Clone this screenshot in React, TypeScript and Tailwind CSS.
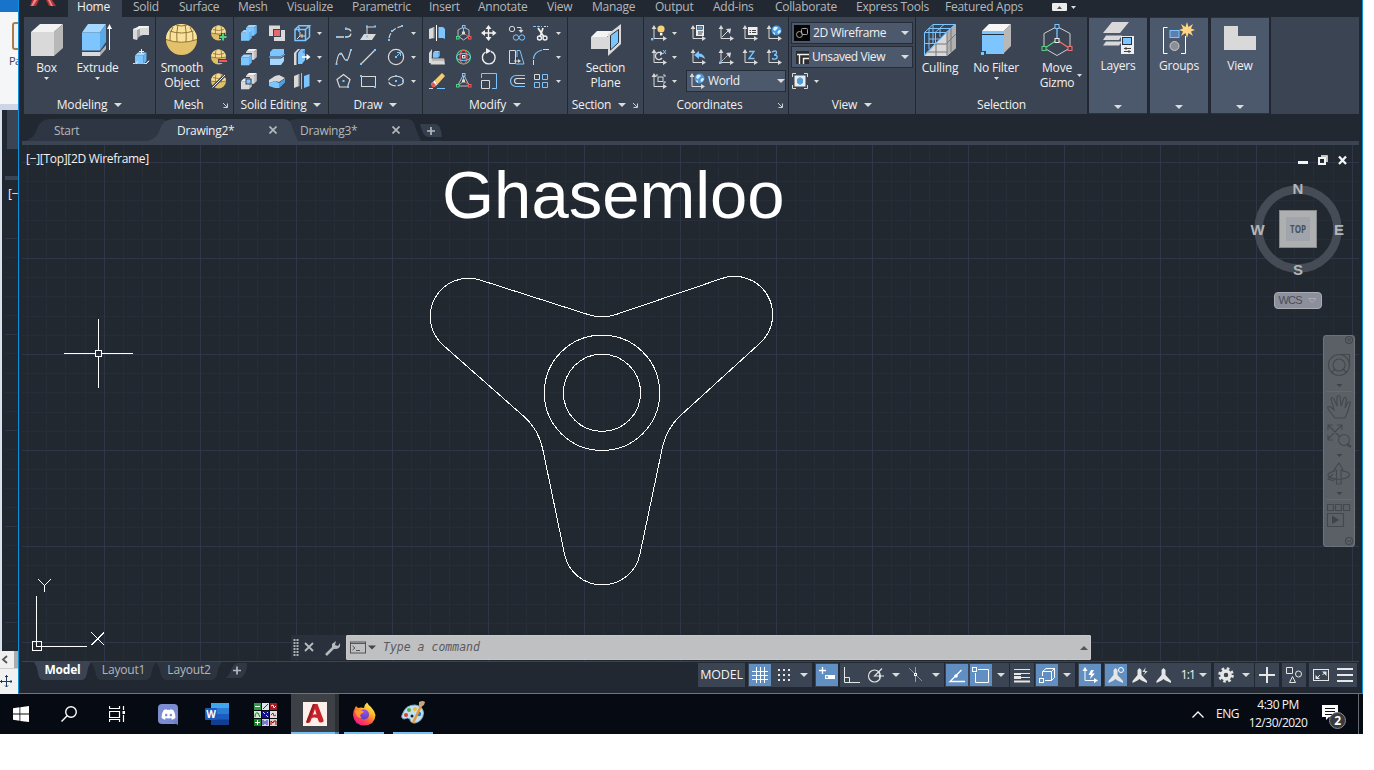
import React from "react";
import { FaDiscord } from "react-icons/fa";

type Kids = { children?: React.ReactNode };

const L = "#d9d9d9";
const B = "#7cc5ff";
const D = "#3b4453";

function Sm({ children }: Kids) {
  return (
    <svg className="block h-4 w-4 shrink-0 overflow-visible" viewBox="0 0 16 16" fill="none" strokeWidth="1">
      {children}
    </svg>
  );
}

function Big({ children }: Kids) {
  return (
    <svg className="block h-8 w-8 shrink-0 overflow-visible" viewBox="0 0 32 32" fill="none">
      {children}
    </svg>
  );
}

function Tri({ big = false }: { big?: boolean }) {
  return big ? (
    <svg className="block h-1 w-2 shrink-0" viewBox="0 0 8 4">
      <path d="M0 0H8L4 4Z" fill="#dcdcdc" />
    </svg>
  ) : (
    <svg className="block h-[3px] w-[5px] shrink-0" viewBox="0 0 5 3">
      <path d="M0 0H5L2.5 3Z" fill="#dcdcdc" />
    </svg>
  );
}

function Launcher() {
  return (
    <svg className="block h-[5px] w-[5px]" viewBox="0 0 5 5" fill="none" stroke="#d0d0d0">
      <path d="M0 0L4 4M4.5 0.5V4.5H0.5" />
    </svg>
  );
}

function Dots({ pts }: { pts: [number, number][] }) {
  return (
    <>
      {pts.map(([x, y]) => (
        <rect key={x + "-" + y} x={x - 1} y={y - 1} width="2" height="2" fill={B} />
      ))}
    </>
  );
}

function Axes({ children }: Kids) {
  return (
    <Sm>
      <path d="M3 2V13.5H13" stroke={L} />
      <path d="M0.6 4L3 0L5.4 4ZM12 11L16 13.5L12 16Z" fill={L} />
      {children}
    </Sm>
  );
}

function Cube({ x, y, s, f, t, r }: { x: number; y: number; s: number; f: string; t: string; r: string }) {
  const d = s * 0.35;
  return (
    <g>
      <rect x={x} y={y + d} width={s} height={s} fill={f} />
      <path d={`M${x} ${y + d}l${d} ${-d}h${s}l${-d} ${d}Z`} fill={t} />
      <path d={`M${x + s} ${y + d}l${d} ${-d}v${s}l${-d} ${d}Z`} fill={r} />
    </g>
  );
}

const blueCube = { f: "#7cc5ff", t: "#a0d5ff", r: "#66b4f0" };
const greyCube = { f: "#d9d9d9", t: "#f2f2f2", r: "#bfbfbf" };

/* ---------- ribbon icons ---------- */

const SmallSphere = () => (
  <>
    <circle cx="7.5" cy="8" r="7.5" fill="#e0bd67" />
    <path d="M0 8a7.5 7.5 0 0 1 15 0Z" fill="#f6dc93" />
    <path d="M0 8Q7.5 10.5 15 8M2 4.5Q7.5 6.5 13 4.5M5 1Q4 5 4.5 9M10 1Q11 5 10.5 9" stroke="#8a7038" strokeWidth="0.8" />
  </>
);

const Globe = () => (
  <>
    <circle cx="10.5" cy="5.5" r="5" fill="#4d9bdc" />
    <path d="M8 2Q11 1 12 3Q10 5 9 6Q6 5 8 2M12 6Q14 4 15 6Q14 9 12 9Q11 7 12 6M7 7L9 8L9 10Q7 9 7 7" fill="#d9f0ff" />
  </>
);

const modelingIcons = [
  <Sm>
    <path d="M0 4Q5 2 6 1H16V10H10Q4 11 4 15L0 14Z" fill="#d9d9d9" />
    <path d="M0 4Q5 3 6 1H16L14 3H8Q6 4 4 5Z" fill="#f4f4f4" />
    <path d="M4 5Q5 4 7 4V11Q5 12 4 15Z" fill="#a8a8a8" />
  </Sm>,
  <Sm>
    <path d="M0 14.5H13L16 11.5" stroke={L} />
    <Cube x={2} y={3.5} s={8.5} {...blueCube} />
    <path d="M8.5 0V5M6 2.5H11M3 15L5 12M13 15L16 12" stroke="#eee" />
  </Sm>,
];

const meshIcons = [
  <Sm><SmallSphere /><path d="M12 8V16M8 12H16" stroke="#3b4453" strokeWidth="4" /><path d="M12 8.5V15.5M8.5 12H15.5" stroke="#53d17c" strokeWidth="2" /></Sm>,
  <Sm><SmallSphere /><path d="M7 12H16" stroke="#3b4453" strokeWidth="4" /><path d="M8 12H16" stroke="#f05a5a" strokeWidth="2" /></Sm>,
  <Sm><SmallSphere /><path d="M1 15L15 1" stroke="#3b4453" strokeWidth="3" /><path d="M1.5 14.5L14 2" stroke="#eee" /></Sm>,
];

const solidIcons = [
  <Sm><Cube x={5} y={0} s={8} {...blueCube} /><Cube x={0} y={5} s={8} {...blueCube} /><path d="M5.5 3H8V8H5.5Z" fill={B} /></Sm>,
  <Sm><path d="M0 0.5H11V4H4V11H0ZM12 5H16V16H5V12H12Z" fill={L} /><rect x="4.5" y="4.5" width="7" height="7" fill="#e8696b" stroke={D} /></Sm>,
  <Sm><path d="M1 4.5H11.5V15.5H1ZM1 4.5L5 0.8H15.5L11.5 4.5M15.5 0.8V12L11.5 15.5M5 2V7" stroke={B} strokeWidth="1.5" /><path d="M6 7V11H11M6 11L3 14M8 9V13" stroke={L} /></Sm>,
  <Tri />,
  <Sm><Cube x={5} y={0} s={8} {...greyCube} /><path d="M-0.5 6L2 4H11V12L9 16H-0.5Z" fill={D} /><Cube x={0} y={5.5} s={8} {...blueCube} /></Sm>,
  <Sm><path d="M1 3L4 0H15V5L12 7H1Z" fill={B} /><path d="M0 8H12L16 5" stroke={B} /><path d="M1 9.5H12L15 7.5V12L12 16H1Z" fill="#a6d8ff" /></Sm>,
  <Sm><path d="M0 4L4 0H6L2.5 4V16H0Z" fill={L} /><path d="M4 4L7 0H11V11L8 15H4Z" fill={B} /><path d="M8 3L11 0V5" fill="#4c9ede" /><path d="M8 8H13" stroke="#fff" strokeWidth="1.6" /><path d="M12.5 4.8L16.5 8L12.5 11.2Z" fill="#fff" /></Sm>,
  <Tri />,
  <Sm><Cube x={5} y={0} s={8} {...greyCube} /><path d="M-0.5 6L2 4H9L9 16H-0.5Z" fill={D} /><Cube x={0} y={5.5} s={8} {...greyCube} /><rect x="5" y="6" width="5" height="5" fill={B} stroke={D} /></Sm>,
  <Sm><path d="M0 7L6 3L10 2L16 5L10 9L6 8L0 10Z" fill={L} /><path d="M0 10L6 8L10 10L16 6V9L10 15H6L0 13Z" fill={B} /><path d="M10 10L16 6V9L10 15Z" fill="#4c9ede" /></Sm>,
  <Sm><path d="M0 3L5 1V13L0 15Z" fill={L} /><path d="M4 1.4L5.5 1V13L4 13.5Z" fill="#aaa" /><path d="M7.5 0V16" stroke={B} /><path d="M10 3L15.5 1V13L10 15Z" fill={B} /></Sm>,
  <Tri />,
];

const drawIcons = [
  <Sm><path d="M1 12H9M9 4Q15 3 15 7.5Q15 12 11 12" stroke={L} strokeWidth="1.3" strokeDasharray="7 2" /><Dots pts={[[1, 12], [10, 3.5], [10, 12]]} /></Sm>,
  <Sm><path d="M0 15L4 9H16L12 15Z" fill={L} /><path d="M7 12V2H14" stroke={L} /><Dots pts={[[7, 1.5], [15, 1.5], [7, 11.5]]} /></Sm>,
  <Sm><path d="M1 13Q3 4 13 1.5" stroke={L} strokeWidth="1.2" strokeDasharray="5 2" /><Dots pts={[[1, 15], [4, 6], [14, 1]]} /></Sm>,
  <Tri />,
  <Sm><path d="M0.5 14Q2 4 5 4Q6 5 8 9Q10 13 12 10Q13 8 14.5 2" stroke={L} strokeWidth="1.1" /><Dots pts={[[0.5, 15], [4, 5], [11, 11], [15, 1]]} /></Sm>,
  <Sm><path d="M1 15L15 1" stroke={L} strokeWidth="1.2" /><Dots pts={[[1, 15], [15, 1]]} /></Sm>,
  <Sm><circle cx="8" cy="8" r="7.6" stroke={L} strokeWidth="1.2" /><path d="M8 8L12 4M12.5 7V3.5H9" stroke={B} /><Dots pts={[[8, 8]]} /></Sm>,
  <Tri />,
  <Sm><path d="M7.5 1.5L14 6.5L11.5 14H3.5L1 6.5Z" stroke={L} strokeWidth="1.2" /><Dots pts={[[7.5, 8], [12, 14]]} /></Sm>,
  <Sm><rect x="1.5" y="3.5" width="14" height="10" stroke={L} /><Dots pts={[[1, 3], [15, 14]]} /></Sm>,
  <Sm><ellipse cx="8" cy="8" rx="7.5" ry="4.8" stroke={L} strokeWidth="1.2" strokeDasharray="8 2" /><Dots pts={[[8, 8], [8, 3], [15, 8]]} /></Sm>,
  <Tri />,
];

const Gizmo = ({ line = true }: { line?: boolean }) => (
  <>
    {line && <path d="M7.5 2L13 5V11L7.5 15L2 11V5Z" stroke="#b9bdc3" />}
    <path d="M7.5 8V3" stroke={B} /><path d="M7.5 8L3 12" stroke="#53d17c" /><path d="M7.5 8L13 12" stroke="#f05a5a" />
    <rect x="6.5" y="0.5" width="2.500" height="2.500" stroke={B} fill={D} />
    <rect x="0.5" y="11.5" width="2.500" height="2.500" stroke="#53d17c" fill={D} />
    <rect x="12.5" y="11.5" width="2.500" height="2.500" stroke="#f05a5a" fill={D} />
    <rect x="6.5" y="7" width="2" height="2" stroke="#d9d9d9" fill={D} />
  </>
);

const modifyIcons = [
  <Sm><path d="M0 4L5 2V13L0 14Z" fill={L} /><path d="M4 2.4L5.5 2V13L4 13.5Z" fill="#aaa" /><path d="M7.5 0V16" stroke="#fff" /><path d="M9.5 2H14L16 4V14L14 13H9.5Z" fill={B} /></Sm>,
  <Sm><Gizmo /></Sm>,
  <Sm><path d="M7.5 2V14M2 8H14" stroke="#f0f0f0" strokeWidth="1.4" /><path d="M7.5 0L10.5 4H4.5ZM7.5 16L10.5 12H4.5ZM0 8L4 5V11ZM15.5 8L11.5 5V11Z" fill="#f0f0f0" /></Sm>,
  <Sm><circle cx="3" cy="4" r="2.7" stroke={L} /><path d="M8 2.5H12V6" stroke={L} /><path d="M9.5 5H14.5L12 8Z" fill={L} /><circle cx="7" cy="12.5" r="2.7" stroke={B} /><circle cx="13" cy="12.5" r="2.7" stroke={B} /></Sm>,
  <Sm><path d="M0 1.5H9" stroke={B} strokeDasharray="3 1" /><path d="M11 1.5H15" stroke={L} strokeDasharray="2 1" /><path d="M5 3L11 12M10 3L7 12" stroke="#f0f0f0" strokeWidth="1.7" /><circle cx="6.5" cy="13" r="2" stroke="#f0f0f0" strokeWidth="1.4" /><circle cx="12" cy="13" r="2" stroke="#f0f0f0" strokeWidth="1.4" /></Sm>,
  <Tri />,
  <Sm><path d="M0 4L3 0V2L2.5 14H0Z" fill={L} /><Cube x={4} y={2} s={5} {...blueCube} /><path d="M0 9.5H15L16 15.5H2Z" fill={L} /><path d="M3 11H16" stroke="#999" /></Sm>,
  <Sm><circle cx="7.5" cy="8" r="7" stroke="#53d17c" strokeWidth="1.2" /><ellipse cx="7.5" cy="8" rx="3.5" ry="7" stroke="#f05a5a" strokeWidth="1.2" /><ellipse cx="7.5" cy="8" rx="7" ry="3.5" stroke={B} /><rect x="6.5" y="6.5" width="2.5" height="2.5" stroke="#eee" fill={D} /></Sm>,
  <Sm><path d="M4.5 3A6.4 6.4 0 1 0 10 2.5" stroke="#f0f0f0" strokeWidth="1.4" /><path d="M4 0L9 3L4 6Z" fill="#f0f0f0" transform="translate(1 -1)" /></Sm>,
  <Sm><path d="M0.5 1.5H6.5V14.5H0.5ZM5 12H10" stroke={L} /><path d="M9 10L12 12L9 14Z" fill={L} /><path d="M8 1.5H11L15 15H7M8 1.5V8" stroke={B} /></Sm>,
  <Sm><path d="M0.5 10Q1 3 9 1" stroke={B} strokeWidth="1.2" /><path d="M10 0.5H16M0.5 11V16" stroke={L} /></Sm>,
  <Tri />,
  <Sm><path d="M6 7L13 0L16 3L8 12Z" fill="#f5cd6e" /><path d="M6 7L8 12L5 14L2 11Z" fill="#fff" /><path d="M4 9L7 12L5 14.5Q2 14 2 11.5Z" fill="#e25858" /><path d="M0 15.5H4" stroke={L} /><path d="M8 15.5H16" stroke={B} /></Sm>,
  <Sm><path d="M7.5 1.5L1.5 13H13.5Z" stroke="#b9bdc3" /><Gizmo line={false} /></Sm>,
  <Sm><path d="M0.5 7.5H8.5V15.5H0.5Z" stroke={L} /><path d="M0.5 5V0.5H15.5V15.5H11" stroke={B} /></Sm>,
  <Sm><path d="M16 2.5H7A5.5 5.5 0 0 0 7 13.5H16" stroke={B} strokeWidth="1.2" /><path d="M16 5.5H8A2.5 2.5 0 0 0 8 10.5H16" stroke={L} strokeWidth="1.2" /></Sm>,
  <Sm><path d="M1.5 1.5H6.5V6.5H1.5Z" stroke={L} /><path d="M9.5 1.5H14.5V6.5H9.5ZM1.5 9.5H6.5V14.5H1.5ZM9.5 9.5H14.5V14.5H9.5Z" stroke={B} /></Sm>,
  <Tri />,
];

const coordIcons = [
  <Axes><circle cx="10" cy="4" r="3.6" fill="#fbd277" /><rect x="9" y="8" width="2.4" height="2.4" fill="#fff" /><rect x="0" y="13" width="2.4" height="2.4" fill={B} /></Axes>,
  <Tri />,
  <Axes><rect x="6" y="0" width="8" height="11" fill="#eee" /><rect x="7.5" y="1.5" width="5" height="3" fill="#4c9ede" stroke="#333" strokeWidth="0.6" /><path d="M8 7H13M8 9H12" stroke="#444" /></Axes>,
  <Axes><path d="M4 12L11 5" stroke={L} /><path d="M8 4L13 3.5L12 9Z" fill={L} /></Axes>,
  <Axes><rect x="6" y="2" width="9.5" height="8" fill="#eee" /><path d="M7.5 5.5H9M10 5.5H14M7.5 7.5H9M10 7.5H14" stroke="#444" /></Axes>,
  <Axes><Globe /></Axes>,
  <Axes><path d="M11 5A3.6 3.6 0 1 0 11 9" stroke={L} strokeWidth="1.4" /><path d="M9 2L12 4.5L9 7Z" fill={L} /><path d="M12 1L15 5M15 1L12 5" stroke={B} /></Axes>,
  <Tri />,
  <Axes><path d="M4 6L9 2V4.5Q14 4.5 15 10Q12 7.5 9 7.5V10Z" fill={B} /></Axes>,
  <Axes><path d="M4 12L11 5" stroke={L} strokeDasharray="2 1" /><path d="M8 4L13 3.5L12 9Z" fill={L} /><rect x="1" y="12.5" width="2.5" height="2.5" fill={B} /></Axes>,
  <Axes><path d="M7 2.5H12L7 9.5H12.5" stroke={B} strokeWidth="1.3" /></Axes>,
  <Axes><path d="M6 3Q11 0.5 10.5 4Q10 6 8 6Q12 6 11 9Q9 11 6 9.5" stroke={B} strokeWidth="1.4" /></Axes>,
];

function IconGrid({ icons, className }: { icons: React.ReactNode[]; className: string }) {
  return (
    <div className={"grid auto-rows-[24px] items-center " + className}>
      {icons.map((icon, i) => (
        <div key={i}>{icon}</div>
      ))}
    </div>
  );
}

function Panel({ title, width, arrow, launcher, shift = "", children }: Kids & { title: string; width: string; arrow?: boolean; launcher?: boolean; shift?: string }) {
  return (
    <section className={"mr-px flex h-[97px] shrink-0 flex-col bg-[#3b4453] pt-1 " + width}>
      <div className="h-[72px]">{children}</div>
      <div className={"relative flex h-[21px] items-center justify-center gap-[7px] pt-[3px] " + shift}>
        <span className="whitespace-nowrap leading-[16px]">{title}</span>
        {arrow && <Tri big />}
        {launcher && <div className="absolute top-[10px] right-[5px]"><Launcher /></div>}
      </div>
    </section>
  );
}

function BigButton({ icon, lines, width, arrow }: { icon: React.ReactNode; lines: string[]; width: string; arrow?: boolean }) {
  return (
    <div className={"flex shrink-0 flex-col items-center pt-[3px] " + width}>
      {icon}
      <div className="mt-[4px] text-center leading-[15px] whitespace-nowrap">
        {lines.map((t) => (
          <div key={t}>{t}</div>
        ))}
      </div>
      {arrow && <div className="mt-[2px]"><Tri /></div>}
    </div>
  );
}

function Select({ icon, label, className }: { icon: React.ReactNode; label: string; className: string }) {
  return (
    <div className={"flex h-[22px] items-center border border-[#252c38] bg-[#4c586c] " + className}>
      {icon}
      <span className="ml-[3px] flex-1 tracking-[-0.400px] whitespace-nowrap">{label}</span>
      <Tri big />
    </div>
  );
}

function Collapsed({ icon, label }: { icon: React.ReactNode; label: string }) {
  return (
    <section className="flex h-[97px] w-[58px] shrink-0 flex-col items-center border-y border-[#2b3340] bg-[#4c586c] pt-1">
      {icon}
      <span className="mt-[4px] leading-[15px]">{label}</span>
      <div className="mt-auto mb-[4px]"><Tri big /></div>
    </section>
  );
}

const menus: [string, string][] = [
  ["Solid", "w-[46px]"], ["Surface", "w-[59px]"], ["Mesh", "w-[49px]"], ["Visualize", "w-[65px]"], ["Parametric", "w-[77px]"],
  ["Insert", "w-[49px]"], ["Annotate", "w-[69px]"], ["View", "w-[45px]"], ["Manage", "w-[63px]"], ["Output", "w-[58px]"],
  ["Add-ins", "w-[62px]"], ["Collaborate", "w-[81px]"], ["Express Tools", "w-[89px]"], ["Featured Apps", "w-[107px]"],
];

function MenuBar() {
  return (
    <nav className="flex h-[17px] items-start leading-[14px] tracking-[-0.250px] whitespace-nowrap text-[#b4b8be]">
      <div className="w-[49px] pl-[11px]">
        <svg className="block h-[6px] w-[26px]" viewBox="0 0 26 6">
          <path d="M2 0H9L6 6H0ZM16 0H22L26 6H19Z" fill="#b53236" />
          <path d="M4 0H7L3 6H1ZM18 0H20L23 6H21Z" fill="#e8898b" />
        </svg>
      </div>
      <div className="mr-[11px] h-[17px] w-[54px] bg-[#3b4453] pr-[3px] text-center text-[#f2f2f2]">Home</div>
      {menus.map(([m, w]) => (
        <div key={m} className={"shrink-0 " + w}>{m}</div>
      ))}
      <div className="mt-[3px] flex h-2 w-[15px] items-center justify-center rounded-[1px] bg-[#ececec]">
        <svg className="h-[3px] w-[5px]" viewBox="0 0 5 3"><path d="M0 3L2.5 0L5 3Z" fill="#555" /></svg>
      </div>
      <div className="mt-[6px] ml-1"><Tri /></div>
    </nav>
  );
}

function Ribbon() {
  return (
    <div className="flex h-[97px] pl-[5px] text-[#f0f0f0]">
      <Panel title="Modeling" width="w-[131px]" arrow>
        <div className="flex">
          <BigButton width="w-[45px]" lines={["Box"]} arrow icon={
            <Big>
              <path d="M0 8L9 0H32L23 8Z" fill="#f2f2f2" /><path d="M0 8H23V32H0Z" fill="#d9d9d9" /><path d="M23 8L32 0V24L23 32Z" fill="#b8b8b8" />
            </Big>} />
          <BigButton width="w-[57px]" lines={["Extrude"]} arrow icon={
            <Big>
              <path d="M0 28H18V32H0Z" fill={L} /><path d="M18 28L24 21V25L18 32Z" fill="#b0b0b0" />
              <path d="M0 8.5L6 0H24L18 8.5Z" fill="#a6d8ff" /><path d="M0 8.5H18V26.5H0Z" fill={B} /><path d="M18 8.5L24 0V18L18 26.5Z" fill="#5aa8e6" />
              <path d="M27.5 3V26" stroke="#fff" /><path d="M25 5L27.5 0L30 5Z" fill="#fff" />
            </Big>} />
          <IconGrid icons={modelingIcons} className="pl-[7px]" />
        </div>
      </Panel>
      <Panel title="Mesh" width="w-[77px]" launcher shift="pr-[12px]">
        <div className="flex">
          <BigButton width="w-[52px]" lines={["Smooth", "Object"]} icon={
            <Big>
              <circle cx="15.5" cy="15.5" r="15.5" fill="#e3c06a" />
              <path d="M0 15.5A15.5 15.5 0 0 1 31 15.5Q15.5 21 0 15.5" fill="#fbe29c" />
              <path d="M0 15.5Q15.5 21 31 15.5M3.5 7Q15.5 11 27.5 7M12 0.5Q10 9 11 18M19 0.5Q21 9 20 18M7 3Q3 9 4 17M24 3Q28 9 27 17M10 1Q15.5 3 21 1" stroke="#8f7536" />
            </Big>} />
          <IconGrid icons={meshIcons} className="pl-[3px]" />
        </div>
      </Panel>
      <Panel title="Solid Editing" width="w-[94px]" arrow>
        <IconGrid icons={solidIcons} className="grid-cols-[28px_25px_23px_9px] pl-[7px]" />
      </Panel>
      <Panel title="Draw" width="w-[93px]" arrow>
        <IconGrid icons={drawIcons} className="grid-cols-[24px_28px_23px_9px] pl-[7px]" />
      </Panel>
      <Panel title="Modify" width="w-[144px]" arrow>
        <IconGrid icons={modifyIcons} className="grid-cols-[27px_25px_28px_24px_23px_9px] pl-[6px]" />
      </Panel>
      <Panel title="Section" width="w-[75px]" arrow launcher shift="pr-[13px]">
        <div className="flex">
          <BigButton width="w-[75px]" lines={["Section", "Plane"]} icon={
            <Big>
              <path d="M1 13L7 7H23L17 13Z" fill="#f4f4f4" /><path d="M1 13H18V25H1Z" fill={L} />
              <path d="M18 10L31 0V20L18 32Z" fill={L} /><path d="M20.5 11.5L28.5 5.5V18.5L20.5 26Z" fill={B} stroke="#2b3340" />
            </Big>} />
        </div>
      </Panel>
      <Panel title="Coordinates" width="w-[144px]" launcher shift="pr-[13px]">
        <IconGrid icons={coordIcons} className="grid-cols-[21px_18px_28px_24px_24px_20px] pl-[7px]" />
        <div className="flex h-6 items-center pl-[7px]">
          <Axes><path d="M5 4V2H7M12 2H14V4M14 8V10H12" stroke={L} /><rect x="7" y="4" width="5" height="4.5" stroke={L} /></Axes>
          <div className="ml-[5px]"><Tri /></div>
          <Select className="ml-[9px] w-[100px] pl-[2px]" label="World" icon={<Axes><Globe /></Axes>} />
        </div>
      </Panel>
      <Panel title="View" width="w-[126px]" arrow>
        <div className="flex flex-col gap-[2px] px-[2px] pt-px">
          <Select className="pr-[3px] pl-[2px]" label="2D Wireframe" icon={
            <svg className="h-4 w-4 shrink-0" viewBox="0 0 16 16" fill="none" stroke="#a5a5a5"><rect width="16" height="16" fill="#050505" stroke="none" /><circle cx="5.5" cy="9.5" r="3" /><rect x="7.5" y="3.5" width="6" height="6" rx="1" /></svg>} />
          <Select className="pr-[3px] pl-[4px]" label="Unsaved View" icon={
            <svg className="h-[13px] w-[13px] shrink-0" viewBox="0 0 13 13" fill="none" stroke="#f0f0f0"><rect width="13" height="13" fill="#2b2b2b" stroke="none" /><path d="M1 3.5H13M3.5 4V13M7.5 13V7.5H13" strokeWidth="1.4" /></svg>} />
          <div className="flex h-[22px] items-center pl-px">
            <Sm>
              <path d="M0.5 4V0.5H4M12 0.5H15.5V4M15.5 12V15.5H12M4 15.5H0.5V12" stroke={L} />
              <rect x="2.5" y="2.5" width="11" height="11" fill="#ececec" /><path d="M5 6L8 4L11 6V10L8 12L5 10Z" fill="#4c9ede" />
            </Sm>
            <div className="ml-[6px]"><Tri /></div>
          </div>
        </div>
      </Panel>
      <Panel title="Selection" width="w-[171px]">
        <div className="flex">
          <BigButton width="w-[48px]" lines={["Culling"]} icon={
            <Big>
              <path d="M0 32L23 8L32 0V24L23 32Z" fill={L} /><path d="M23 8L32 0V24L23 32Z" fill="#b0b0b0" />
              <path d="M12 20V32M4 28H23M11 20H23M23 8V32M27 4V28M23 19L32 10" stroke="#777" />
              <path d="M0.5 31V8.5H22L0.5 31M0.5 8.5L9 0.5H31L22 8.5M11.5 8V20M0.5 19.5H11M11 8.5L20 0.5M5 4.5H27M5 4V25M9 1V20M16 5V13M5 15H17" stroke={B} />
            </Big>} />
          <BigButton width="w-[64px]" lines={["No Filter"]} arrow icon={
            <Big>
              <path d="M2 7L9 0H31L24 7Z" fill="#f6f6f6" /><path d="M24 7L31 0V22L24 29Z" fill="#b8b8b8" />
              <path d="M2 7H24V30H6V27H2Z" fill={B} /><path d="M2 10.5H24" stroke="#26303e" /><rect x="1" y="28" width="3" height="3" fill={B} />
            </Big>} />
          <div className="relative">
            <BigButton width="w-[58px]" lines={["Move", "Gizmo"]} icon={
              <Big>
                <path d="M16 2.5L29 9.5V24L16 31.5L3 24V9.5Z" stroke="#cfcfcf" />
                <path d="M16 16V4" stroke={B} strokeWidth="1.3" /><path d="M16 16L4 24" stroke="#53d17c" strokeWidth="1.3" /><path d="M16 16L28 24" stroke="#f27070" strokeWidth="1.3" />
                <g fill={D}><rect x="14" y="0.5" width="4" height="4" stroke={B} /><rect x="14" y="14.5" width="4" height="4" stroke="#eee" /><rect x="1" y="22.5" width="4" height="4" stroke="#53d17c" /><rect x="27" y="22.5" width="4" height="4" stroke="#f27070" /></g>
              </Big>} />
            <div className="absolute top-[53px] left-[49px]"><Tri /></div>
          </div>
        </div>
      </Panel>
      <div className="ml-px flex gap-[3px]">
        <Collapsed label="Layers" icon={
          <Big>
            <path d="M1 11L10 0H27L18 11ZM1 18L4 13.5H20L17 18ZM1 23.5L4 19.5H20L17 23.5Z" fill={L} />
            <rect x="19" y="14" width="13" height="18" fill="#eee" /><rect x="20.5" y="15.5" width="9" height="7" fill={B} stroke="#26303e" />
            <path d="M22 26.5H29M22 29.5H29M24 25V28M27 28V31" stroke="#444" />
          </Big>} />
        <Collapsed label="Groups" icon={
          <Big>
            <path d="M4.5 5.5H0.5V31.5H4.5M18 31.5H22.5V14" stroke="#fff" />
            <rect x="7" y="8.5" width="9" height="7" fill="#5b7fae" stroke={B} /><circle cx="11.5" cy="24" r="4.5" fill="#8a8f98" stroke="#c9c9c9" />
            <path d="M24 0L25.5 5L30 2L28 6.5L32 8L28 9.5L30 14L25.5 11L24 16L22.5 11L18 14L20 9.5L16 8L20 6.5L18 2L22.5 5Z" fill="#fdd583" />
          </Big>} />
        <Collapsed label="View" icon={<Big><path d="M0 4H14V14H32V28H0Z" fill={L} /></Big>} />
      </div>
      <div className="ml-[2px] h-[97px] w-[88px] bg-[#3b4453]" />
    </div>
  );
}

function DocTab({ label, active, width, pad, close }: { label: string; active?: boolean; width: string; pad: string; close?: boolean }) {
  return (
    <div className={"relative h-[22px] shrink-0 " + width}>
      <svg className="absolute top-0 -left-[20px] h-[22px] w-[calc(100%+28px)]" viewBox="0 0 150 22" preserveAspectRatio="none">
        <path d="M0 22Q10 20 13 10Q16 0 26 0H136Q143 0 144 8L150 22Z" fill={active ? "#3b4453" : "#2e3643"} />
      </svg>
      <div className={"relative flex h-[22px] items-center pt-px " + pad}>
        <span className="flex-1">{label}</span>
        {close && (
          <svg className="mb-px h-2 w-2" viewBox="0 0 8 8" stroke="#b4b8be" strokeWidth="1.7"><path d="M0.5 0.5L7.5 7.5M7.5 0.5L0.5 7.5" /></svg>
        )}
      </div>
    </div>
  );
}

function DocTabs() {
  return (
    <div className="flex h-[27px] items-end pl-[25px] tracking-[-0.300px] text-[#b4b8be]">
      <DocTab label="Start" width="w-[123px]" pad="pl-[10px]" />
      <div className="z-10 text-[#f0f0f0]"><DocTab label="Drawing2*" active width="w-[123px]" pad="pl-[10px] pr-[13px]" close /></div>
      <DocTab label="Drawing3*" width="w-[123px]" pad="pl-[10px] pr-[13px]" close />
      <svg className="ml-[6px] h-[22px] w-6" viewBox="0 0 24 22">
        <path d="M1 5H16Q22 5 23 18H9Q4 18 1 5Z" fill="#353e4c" /><path d="M12 8V16M8 12H16" stroke="#b4b8be" strokeWidth="1.7" />
      </svg>
    </div>
  );
}

/* ---------- drawing area ---------- */

const gridX = Array.from({ length: 70 }, (_, i) => ({ at: Math.floor(27.5 + i * 19.2) + 0.5, major: i % 5 === 4 }));
const gridY = Array.from({ length: 26 }, (_, i) => ({ at: Math.floor(162.4 + i * 19.2) + 0.5, major: i % 5 === 0 }));

function Grid() {
  return (
    <g shapeRendering="crispEdges">
      {[false, true].map((m) => (
        <g key={String(m)} stroke={m ? "#2f3647" : "#262d39"}>
          {gridX.filter((l) => l.major === m).map((l) => <path key={l.at} d={`M${l.at} 145V661`} />)}
          {gridY.filter((l) => l.major === m).map((l) => <path key={l.at} d={`M22 ${l.at}H1359`} />)}
        </g>
      ))}
    </g>
  );
}

function Compass() {
  return (
    <g fontFamily="Liberation Sans, sans-serif" textAnchor="middle" letterSpacing="0">
      <circle cx="1298" cy="229" r="39.5" fill="none" stroke="#454c55" strokeWidth="8.5" />
      <rect x="1279.5" y="210.5" width="37" height="37" fill="#adafb0" stroke="#85898c" />
      <rect x="1286" y="217" width="24" height="24" fill="#9fa5ab" />
      <text x="1298" y="233" fontSize="10" fontWeight="700" fill="#48505a" textLength="16" lengthAdjust="spacingAndGlyphs" fontFamily="Open Sans, sans-serif">TOP</text>
      <g fontSize="15" fontWeight="700" fill="#b3b6b8">
        <text x="1298" y="194">N</text><text x="1298" y="275">S</text><text x="1257.5" y="234.5">W</text><text x="1339" y="234.5">E</text>
      </g>
      <rect x="1274.5" y="292.5" width="47" height="16" rx="3.5" fill="#8d909c" stroke="#a9acb5" />
      <text x="1290.5" y="304" fontSize="11" fill="#484d58" textLength="24">WCS</text>
      <path d="M1308.5 298.5H1316L1312.3 302.5Z" fill="none" stroke="#a9acb5" />
    </g>
  );
}

function NavBar() {
  return (
    <g fill="none" stroke="#42484f" strokeWidth="1.1">
      <rect x="1323.5" y="335.5" width="31" height="211" rx="3" fill="#5b6067" stroke="#6d7278" />
      <path d="M1326 391.5H1352M1326 499.5H1352" stroke="#656a71" />
      <circle cx="1349" cy="340" r="3.5" /><path d="M1347.5 338.5L1350.5 341.5M1350.5 338.5L1347.5 341.5" />
      <circle cx="1339" cy="365" r="10.5" /><path d="M1341 354.5H1349.5V365" /><circle cx="1339" cy="365" r="6" /><path d="M1331 373L1335 369M1347 373L1343 369" />
      <path d="M1336.500 384H1342.500L1339.500 387ZM1336.500 454H1342.500L1339.500 457ZM1336.500 492H1342.500L1339.500 495Z" fill="#3d434c" stroke="none" />
      <path d="M1335 418L1328 409Q1327 406 1330 406.5L1334 410L1331 399Q1332 396 1334 399L1337 406L1337 397Q1339 394 1340 397L1341 406L1344 398Q1346 396 1346.5 399L1345 408L1348 402Q1351 401 1350 404Q1348 412 1345 418Z" />
      <path d="M1328 425L1342 439M1342 425L1328 439M1328 430V425H1333M1337 425H1342V430M1328 435V440H1333" /><circle cx="1344" cy="440" r="5.5" fill="#5b6067" /><path d="M1347 444L1351 447" strokeWidth="2.5" />
      <path d="M1335 471Q1327 473 1328 476Q1332 480 1342 479Q1350 478 1349.5 474Q1347 471 1342 471" /><path d="M1336.5 484V470H1334L1339 463L1343 470H1341V484Z" /><path d="M1333 474L1328 479L1334 481" />
      <path d="M1327.5 504.5H1333.5V510.5H1327.5ZM1335.5 504.5H1341.5V510.5H1335.5ZM1343.5 504.5H1349.5V510.5H1343.5ZM1327.5 513.5H1343.5V526.5H1327.5Z" />
      <path d="M1332 515.5V524L1339 520Z" fill="#3d434c" stroke="none" />
      <circle cx="1349" cy="541" r="3.5" /><path d="M1347 541H1351" />
    </g>
  );
}

function DrawingArea() {
  return (
    <div className="relative ml-[3px] h-[516px] w-[1337px] bg-[#212830]">
      <svg className="block h-[516px] w-[1337px]" viewBox="22 145 1337 516">
        <Grid />
        <text x="442" y="218" fontSize="67" letterSpacing="0" fill="#fff" fontFamily="Liberation Sans, Arial, sans-serif">Ghasemloo</text>
        <g fill="none" stroke="#fff" shapeRendering="crispEdges">
          <path d="M480.1 280L588 314.5Q602 319 616 314.5L722 278.4A38.3 38.3 0 0 1 759.8 343.3L680 416Q667 428 662.5 447L640 554A38.5 38.5 0 0 1 564.5 554L542.500 448Q538 429 524.5 417L443.4 345.400A38.3 38.3 0 0 1 480.1 280Z" />
          <circle cx="602" cy="392.8" r="57.7" /><circle cx="602" cy="392.8" r="38.6" />
          <path d="M64 353.5H95M102 353.5H133M98.5 319V350M98.5 357V388M95.5 350.5H101.5V356.5H95.5Z" />
          <path d="M36.5 596V646.5H87M32.5 641.5H41.5V650.5H32.5ZM38.5 579.5L44.5 585.5L50.5 579.5M44.5 585.5V592M91.5 632.5L104 645M104 632.5L91.5 645" />
        </g>
        <g stroke="#f4f4f4" fill="none" strokeWidth="2">
          <path d="M1298 162.5H1308" strokeWidth="3" /><path d="M1321 156H1327V162" strokeWidth="1.5" /><path d="M1319 158H1325V164H1319Z" />
          <path d="M1339 156.5L1346 164M1346 156.5L1339 164" strokeWidth="2.3" />
        </g>
        <Compass />
        <NavBar />
      </svg>
      <div className="absolute top-[6px] left-[4px] leading-4 tracking-[-0.300px] text-[#f2f2f2]">[−][Top][2D Wireframe]</div>
      <div className="absolute top-[490px] left-[269px] flex h-[25px] w-[800px]">
        <div className="flex w-[55px] items-center bg-[#2a303c]">
          <svg className="h-[25px] w-[55px]" viewBox="0 0 55 25" fill="none">
            <path d="M3.500 4V21M6.500 4V21" stroke="#b0b3b7" strokeWidth="2" strokeDasharray="2 1" />
            <path d="M14 8L22 16M22 8L14 16" stroke="#b8bbbe" strokeWidth="1.8" />
            <path d="M35 20L43 12" stroke="#b8bbbe" strokeWidth="2.5" /><path d="M41 14V9L45 6L44 10L47 11L49 8Q50 14 44 14Z" fill="#b8bbbe" />
          </svg>
        </div>
        <div className="flex flex-1 items-center rounded-[1px] border border-[#c8c8ca] bg-[#bfc0c2] pr-[2px] pl-[3px]">
          <svg className="h-[13px] w-[27px]" viewBox="0 0 27 13" fill="none" stroke="#555">
            <rect x="0.5" y="1" width="15" height="11" /><path d="M0.5 2.5H15.5" /><path d="M2.5 5L5 7L2.5 9M6 9.5H10" /><path d="M18 4.5H26L22 8.5Z" fill="#444" stroke="none" />
          </svg>
          <span className="ml-[6px] flex-1 font-['DejaVu_Sans_Mono',monospace] text-[11.500px] tracking-normal text-[#5a5a5c] italic">Type a command</span>
          <svg className="h-1 w-2" viewBox="0 0 8 4"><path d="M0 4L4 0L8 4Z" fill="#555" /></svg>
        </div>
      </div>
    </div>
  );
}

/* ---------- status bar ---------- */

function LayoutTab({ label, active, width }: { label: string; active?: boolean; width: string }) {
  return (
    <div className={"relative flex h-[18px] shrink-0 items-center justify-center " + width}>
      <svg className="absolute inset-0 h-full w-full" viewBox="0 0 60 18" preserveAspectRatio="none">
        <path d="M0 0H60Q57 4 56 10Q55 18 50 18H10Q5 18 4 10Q3 4 0 0Z" fill={active ? "#3b4453" : "#2c3440"} />
      </svg>
      <span className={active ? "relative pb-[2px] font-bold text-white" : "relative pb-[2px] text-[#b4b8be]"}>{label}</span>
    </div>
  );
}

function St({ on, children, w = "w-[24px]" }: Kids & { on?: boolean; w?: string }) {
  return (
    <div className={"flex h-6 shrink-0 items-center justify-center " + w}>
      <div className={on ? "flex h-[22px] w-[22px] items-center justify-center bg-[#628fc2]" : "flex items-center justify-center"}>{children}</div>
    </div>
  );
}

function Grp({ children, className }: Kids & { className: string }) {
  return <div className={"flex h-6 shrink-0 bg-[#3b4453] " + className}>{children}</div>;
}

const W = "#e6e6e6";
const Person = () => <path d="M7.5 1L9.5 3V8L15 14V16L9.500 13.500L7.500 12L5.500 13.500L0.500 16V14L5.500 8V3Z" fill={W} />;

function StatusBar() {
  return (
    <footer className="ml-[3px] flex h-8 w-[1337px] border-t border-[#3b4453] bg-[#222831]">
      <div className="flex h-[18px] w-[676px] pl-3">
        <LayoutTab label="Model" active width="w-[57px]" />
        <LayoutTab label="Layout1" width="w-[65px]" />
        <LayoutTab label="Layout2" width="w-[66px]" />
        <svg className="ml-[3px] h-[18px] w-6" viewBox="0 0 24 18"><path d="M1 16Q5 12 7 6Q9 1 13 1H22Q23 10 16 16Z" fill="#303846" /><path d="M12 4.5V12.5M8 8.5H16" stroke="#b4b8be" strokeWidth="1.7" /></svg>
      </div>
      <div className="flex pt-px">
        <Grp className="mr-[3px] w-[47px] items-center justify-center text-[12.500px] text-[#f2f2f2]">MODEL</Grp>
        <Grp className="mr-[3px] w-[64px]">
          <St on><Sm><path d="M4.5 0V16M8.5 0V16M12.5 0V16M0 4.5H16M0 8.5H16M0 12.5H16" stroke="#fff" /></Sm></St>
          <St><Sm><path d="M2 3H16M2 8H16M2 13H16" stroke={W} strokeWidth="2" strokeDasharray="2 3" /></Sm></St>
          <St w="w-4"><Tri big /></St>
        </Grp>
        <Grp className="mr-[2px] w-[23px]"><St on><Sm><path d="M3.5 0V7M0 3.5H7" stroke="#fff" strokeWidth="1.3" /><rect x="6.5" y="8.5" width="9" height="3" fill="#fff" stroke="#fff" /><path d="M8 9V11" stroke="#628fc2" strokeWidth="1.5" /></Sm></St></Grp>
        <Grp className="mr-px w-[104px]">
          <St><Sm><path d="M0.5 0V15.5H16M0.5 10.5H5.5V15" stroke={W} /></Sm></St>
          <St><Sm><circle cx="6.5" cy="9" r="6" stroke={W} strokeWidth="1.1" /><path d="M16 9H6.5L14 1.500" stroke={W} strokeWidth="1.1" /><path d="M10.500 5Q12 7 11.500 11" stroke={W} /></Sm></St>
          <St w="w-[16px]"><Tri big /></St>
          <St><Sm><path d="M1 1L14 14" stroke="#e06a6c" /><path d="M7.5 0V15" stroke="#53c97c" /><rect x="6.5" y="6.5" width="2" height="2" fill={D} stroke="#fff" /></Sm></St>
          <St w="w-[16px]"><Tri big /></St>
        </Grp>
        <Grp className="mr-px w-[64px]">
          <St on><Sm><path d="M16 14.5H1L12.500 3" stroke="#fff" strokeWidth="1.3" /><circle cx="7" cy="9" r="1.8" fill="#fff" /></Sm></St>
          <St on><Sm><path d="M5 2.5H15.5V15.5H2.5V6" stroke="#fff" /><rect x="-0.5" y="0.5" width="4" height="4" stroke="#fff" /></Sm></St>
          <St w="w-4"><Tri big /></St>
        </Grp>
        <Grp className="mr-px w-6"><St><Sm><path d="M0 2.500H16" stroke={W} /><path d="M0 6.500H7M0 6.500H16" stroke={W} strokeWidth="1" /><path d="M0 7H7" stroke={W} strokeWidth="2" /><path d="M7 10.500H16" stroke={W} /><path d="M0 10.500H7" stroke={W} strokeWidth="3" /><path d="M0 14.500H16" stroke={W} strokeWidth="2" /></Sm></St></Grp>
        <Grp className="mr-[3px] w-10">
          <St on><Sm><path d="M3.5 9V4.5L7 1.5H15.5L12.5 4.5H3.5M12.5 4.5V13.5H6M15.5 1.5V10.5L12.5 13.5" stroke="#fff" /><rect x="0.5" y="11.5" width="4" height="4" stroke="#fff" /></Sm></St>
          <St w="w-4"><Tri big /></St>
        </Grp>
        <Grp className="mr-[3px] w-[23px]"><St on><Sm><path d="M3 2V13.5H14" stroke="#fff" /><path d="M0.5 4L3 0L5.5 4ZM12 11L16 13.5L12 16ZM9 3L6.5 8H9L8 12L13 6.5H10L12 3Z" fill="#fff" /></Sm></St></Grp>
        <Grp className="mr-[3px] w-[107px]">
          <St on><Sm><Person /><circle cx="13" cy="3" r="2.5" stroke="#fff" /></Sm></St>
          <St><Sm><Person /><path d="M14 0L10 5H13L11 9L16 4H13Z" fill="#fff" stroke={D} strokeWidth="0.5" /></Sm></St>
          <St><Sm><Person /></Sm></St>
          <div className="flex h-6 w-[35px] items-center justify-end gap-[4px] pr-[4px] tracking-[-0.900px] text-[#f2f2f2]"><span>1:1</span><Tri big /></div>
        </Grp>
        <Grp className="mr-px w-10">
          <St><Sm><circle cx="8" cy="8" r="4" stroke={W} strokeWidth="3.5" /><circle cx="8" cy="8" r="6.5" stroke={W} strokeWidth="2.6" strokeDasharray="2.6 2.5" /></Sm></St>
          <St w="w-4"><Tri big /></St>
        </Grp>
        <Grp className="mr-[3px] w-6"><St><Sm><path d="M8 0V16M0 8H16" stroke={W} strokeWidth="2" /></Sm></St></Grp>
        <Grp className="mr-[3px] w-6"><St><Sm><path d="M0.5 0.5H6.5V6.5H0.5ZM3.5 15.5L6.5 9.5L9.5 15.5Z" stroke={W} /><circle cx="12.5" cy="7" r="3" stroke={W} /></Sm></St></Grp>
        <Grp className="w-12">
          <St><Sm><rect x="0.5" y="2.5" width="15" height="11" stroke={W} /><path d="M9 4.500H13.500V9ZM2.500 8V12H7Z" fill={W} /><path d="M9.500 8L12 5.500M4 11L7 8" stroke={W} /></Sm></St>
          <St><Sm><path d="M0 2H16M0 8H16M0 14H16" stroke={W} strokeWidth="2" /></Sm></St>
        </Grp>
      </div>
    </footer>
  );
}

/* ---------- window behind the main one ---------- */

function BackWindow() {
  return (
    <div className="flex h-[694px] w-[18px] shrink-0 flex-col overflow-hidden">
      <div className="h-3 bg-[#1874cb]" />
      <div className="h-[92px] bg-[#f5f6f7] pt-[10px]">
        <div className="ml-3 h-7 w-4 rounded-l-[3px] border-[2px] border-[#a97b48] bg-[#eef3f8]" />
        <div className="mt-[3px] ml-[9px] text-[11px] tracking-[-0.500px] whitespace-nowrap text-[#444]">Pa</div>
      </div>
      <div className="h-[6px] bg-[#ccd6e6]" />
      <div className="flex h-[541px] border-l-2 border-[#d9e1ec]">
        <div className="w-px bg-[#1191d8]" />
        <div className="flex-1 bg-[#222831]">
          <div className="ml-[5px] h-[39px] bg-[#3b4453]" />
          <div className="mt-[27px] ml-[3px] h-1 bg-[#3b4453]" />
          <div className="mt-[6px] ml-[6px] leading-4 whitespace-nowrap text-[#f2f2f2]">[−</div>
          <svg className="mt-[28px] ml-[3px] block h-[430px] w-3" viewBox="0 0 12 430" shapeRendering="crispEdges">
            {Array.from({ length: 23 }, (_, i) => (
              <path key={i} d={`M0 ${Math.floor(i * 19.2 - 0.5) - 9.5}H12`} stroke={i % 5 === 1 ? "#2f3647" : "#262d39"} />
            ))}
          </svg>
        </div>
      </div>
      <div className="flex h-[17px] bg-[#f0f0f0]">
        <svg className="h-[17px] w-[14px]" viewBox="0 0 14 17" fill="none" stroke="#555" strokeWidth="1.8"><path d="M7 5L3 8.5L7 12" /></svg>
        <div className="w-1 bg-[#acacac]" />
      </div>
      <div className="flex-1 border-t border-[#d0d0d0] bg-[#f1f1f1]">
        <svg className="mt-[6px] h-3 w-3" viewBox="0 0 12 12" fill="none" stroke="#1f3a5f"><path d="M6.5 0V12M0 6.5H12M5 2L6.5 0.5L8 2M5 10.5L6.5 12L8 10.5M2 5L0.5 6.5L2 8M10.5 5L12 6.5L10.5 8" /></svg>
      </div>
    </div>
  );
}

/* ---------- taskbar ---------- */

const gridCells = ["#2f9a4a", "#dfe3ee", "#a01c22", "#cfe6cf", "#12128f", "#e9dada", "#0e8a1e", "#cfd2ea", "#d9d0d0"];
const cellMarks = ["M1 3.5H6", "M1 6L6 1", "M1 3L3 2L4 5L6 3", "M1 6Q1 1 4 2L6 6", "M1 1L3 3M4 4L6 6M5 1L6 2", "M1 4L3 2L4 5L6 4", "M3.5 1V6M1 3.5H6", "M1 1V6M3 2V5M5 1V6", "M1 6V2L3 4L4 2L6 2V6"];
const cellInk = ["#fff", "#22339a", "#fff", "#117722", "#d9d9ff", "#aa2020", "#fff", "#2222aa", "#990000"];

function Taskbar() {
  return (
    <div className="flex h-10 w-[1363px] items-center bg-[#060a12] text-[#f4f4f4]">
      <svg className="ml-[13px] h-4 w-4" viewBox="0 0 16 16" fill="#fff"><path d="M0 2.3L6.5 1.3V7.6H0ZM7.3 1.2L16 0V7.6H7.3ZM0 8.4H6.5V14.7L0 13.8ZM7.3 8.4H16V16L7.3 14.9Z" /></svg>
      <svg className="ml-8 h-4 w-4" viewBox="0 0 16 16" fill="none" stroke="#fff" strokeWidth="1.4"><circle cx="10" cy="6" r="5.3" /><path d="M6.2 9.8L0.5 15.5" /></svg>
      <svg className="ml-8 h-4 w-4" viewBox="0 0 16 16" fill="none" stroke="#fff"><path d="M0.5 0V2.5H10.5V0M0.5 5.5H10.5V11.5H0.5ZM0.5 16V13.5H10.5V16M14.5 0V4M14.5 9V16" strokeWidth="1.2" /><rect x="13.5" y="5" width="2.5" height="3" fill="#fff" stroke="none" /></svg>
      <div className="relative ml-[33px] flex h-5 w-5 items-center justify-center rounded-[4px] bg-[#7b8cd0]">
        <svg className="absolute top-[15px] left-[10px] h-[6px] w-[10px]" viewBox="0 0 10 6"><path d="M0 3L10 0V6L5 3Z" fill="#7082c4" /></svg>
        <FaDiscord className="relative h-[15px] w-[15px] text-white" />
      </div>
      <svg className="ml-[27px] h-[22px] w-6" viewBox="0 0 24 22">
        <rect x="6" y="0" width="18" height="22" rx="1" fill="#1b5cbe" /><path d="M6 0H24V5.5H6Z" fill="#41a5ee" /><path d="M6 5.5H24V11H6Z" fill="#2b7cd3" /><path d="M6 16.5H24V22H6Z" fill="#103f91" />
        <rect x="0" y="5" width="12" height="12" rx="1" fill="#185abd" /><text x="6" y="14.5" textAnchor="middle" fontSize="10" fontWeight="700" fill="#fff" fontFamily="Open Sans, sans-serif">W</text>
      </svg>
      <div className="ml-[25px] grid grid-cols-3 gap-px">
        {gridCells.map((c, i) => (
          <svg key={i} className="block h-[7px] w-[7px]" viewBox="0 0 7 7" fill="none" stroke={cellInk[i]}><rect width="7" height="7" fill={c} stroke="none" /><path d={cellMarks[i]} /></svg>
        ))}
      </div>
      <div className="ml-[14px] flex h-10 w-12">
        <div className="flex h-10 w-11 items-center justify-center border-b-2 border-[#76c0f5] bg-[#3d4045] pt-[2px] pl-1">
          <svg className="h-6 w-6" viewBox="0 0 24 24">
            <rect width="24" height="24" fill="#fdf0ea" />
            <path d="M10 2H14.5L20.500 18Q21 20.500 18 20.500Q16 20.500 15.500 19L14.500 16Q10 15 8.500 16.500L7.500 19.500Q7 21 4 21Q3 21 3.500 19Z" fill="#c8252b" /><path d="M12 7L13.500 12.500Q11 12 9.800 13.200Z" fill="#fdf0ea" /><path d="M10 2H12L5.500 20.500L4 21Q3 21 3.500 19Z" fill="#9b1c21" />
          </svg>
        </div>
        <div className="h-10 w-1 border-b-2 border-[#4f86ad] bg-[#2b2e33]" />
      </div>
      <div className="ml-[5px] flex h-10 w-10 items-center justify-center border-b-2 border-[#76c0f5] pt-px">
        <svg className="h-6 w-6" viewBox="0 0 24 24">
          <defs>
            <linearGradient id="ff" x1="0.85" y1="0.05" x2="0.25" y2="0.95"><stop offset="0" stopColor="#fff35a" /><stop offset="0.35" stopColor="#ffbb26" /><stop offset="0.65" stopColor="#ff5c38" /><stop offset="1" stopColor="#f0158c" /></linearGradient>
            <radialGradient id="fp" cx="0.6" cy="0.2" r="0.9"><stop offset="0" stopColor="#a04df0" /><stop offset="1" stopColor="#4a3fb8" /></radialGradient>
          </defs>
          <path d="M3 6L4 4L6 6Q9 5 12 6Q12 3 15 0.5Q17 4 19 5Q22 8 23.5 13Q23 23 12 23.5Q2 23 1 13Q1 9 3 6Z" fill="url(#ff)" />
          <circle cx="12" cy="12.5" r="5" fill="url(#fp)" /><path d="M3 9Q7 7 11 9Q13 10 9 12Q7 14 10 16Q5 16 4 12Z" fill="#ff9a2e" />
        </svg>
      </div>
      <div className="ml-[9px] flex h-10 w-10 items-center justify-center border-b-2 border-[#76c0f5]">
        <svg className="h-6 w-6 overflow-visible" viewBox="0 0 24 24">
          <path d="M2 12Q5 4 14 4Q22 5 22.5 12Q22 20 14 22Q9 22 9 18Q7 16 3 18Q-1 17 2 12Z" fill="#c4dfee" stroke="#79afd0" />
          <circle cx="5" cy="14" r="2" fill="#d9402f" /><circle cx="8" cy="9" r="2" fill="#56a944" /><circle cx="14" cy="8" r="2" fill="#eebb35" /><circle cx="18" cy="13" r="2.2" fill="#2d7bd0" /><circle cx="11" cy="15" r="1.5" fill="#17212c" />
          <path d="M12 22L20 5" stroke="#e59a35" strokeWidth="2.4" /><path d="M18 5L18 1Q22 -1 24 1L23 4L20 6Z" fill="#cda678" />
        </svg>
      </div>
      <svg className="ml-auto h-[7px] w-3" viewBox="0 0 12 7" fill="none" stroke="#fff" strokeWidth="1.3"><path d="M0.5 6.5L6 1L11.5 6.5" /></svg>
      <span className="ml-3 w-[23px] tracking-[-0.500px] whitespace-nowrap">ENG</span>
      <div className="ml-[8px] w-[62px] text-center leading-[18px] tracking-[-0.500px] whitespace-nowrap">
        <div>4:30 PM</div>
        <div>12/30/2020</div>
      </div>
      <svg className="ml-[13px] h-6 w-6 overflow-visible" viewBox="0 0 24 24">
        <path d="M0 3H16V15H7L4 18V15H0Z" fill="#fff" /><path d="M3 6.5H13M3 9.5H13M3 12.5H10" stroke="#111" />
        <circle cx="15.500" cy="18.5" r="8" fill="#3a3a3c" stroke="#8a8a8c" /><text x="15.500" y="22.7" textAnchor="middle" fontSize="12" fontWeight="700" fill="#fff" fontFamily="Open Sans, sans-serif">2</text>
      </svg>
      <div className="ml-3 h-10 w-px bg-[#666a70]" />
      <div className="w-1" />
    </div>
  );
}

export default function App() {
  return (
    <div className="h-[770px] w-[1374px] overflow-hidden bg-white font-['Open_Sans','Noto_Sans',sans-serif] text-[12px] tracking-[-0.200px]">
      <div className="flex h-[694px]">
        <BackWindow />
        <main className="flex h-[694px] w-[1345px] flex-col border-x border-b border-[#0a93dc] bg-[#222831]">
          <MenuBar />
          <Ribbon />
          <DocTabs />
          <div className="ml-[3px] h-1 w-[1337px] shrink-0 bg-[#3b4453]" />
          <DrawingArea />
          <StatusBar />
        </main>
      </div>
      <Taskbar />
    </div>
  );
}
